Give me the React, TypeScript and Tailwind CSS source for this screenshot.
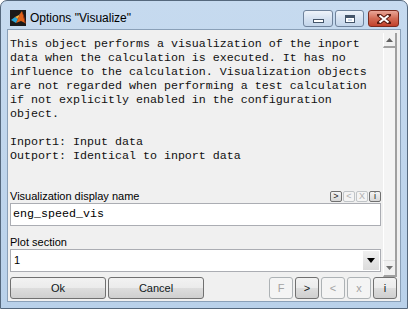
import React from "react";

const DESC = `This object performs a visualization of the inport
data when the calculation is executed. It has no
influence to the calculation. Visualization objects
are not regarded when performing a test calculation
if not explicitly enabled in the configuration
object.

Inport1: Input data
Outport: Identical to inport data`;

const MatlabIcon = () => (
    <svg width="16" height="16" viewBox="0 0 16 16" className="shrink-0">
        <rect x="0" y="0" width="16" height="16" fill="#1a1a1a" />
        <polygon points="1,10 5,7 8,9 6,13" fill="#2aa7d8" />
        <polygon points="5,7 8,9 10,4 12,1 9,5" fill="#f0b040" />
        <polygon points="8,9 10,4 12,1 13,5 15,13 11,11 6,13" fill="#e0621a" />
        <polygon points="12,1 13,5 15,13 16,14 14,6" fill="#b83a10" />
    </svg>
);

const CaptionButton = ({ kind }: { kind: "min" | "max" | "close" }) => {
    if (kind === "close") {
        return (
            <div className="w-[31px] h-[17px] rounded-[3px] border border-[#7a2a1e] bg-gradient-to-b from-[#e9a698] via-[#d26a54] to-[#c2402a] flex items-center justify-center">
                <svg width="14" height="10" viewBox="0 0 14 10">
                    <path d="M2 1 L12 9 M12 1 L2 9" stroke="#5a1a10" strokeWidth="4" strokeLinecap="square" />
                    <path d="M2.5 1.5 L11.5 8.5 M11.5 1.5 L2.5 8.5" stroke="#ffffff" strokeWidth="2.2" />
                </svg>
            </div>
        );
    }
    return (
        <div
            className={`${kind === "min" ? "w-[30px]" : "w-[29px]"} h-[17px] rounded-[3px] border border-[#6f829b] bg-gradient-to-b from-[#eef3fa] via-[#d6e2f1] to-[#c3d5ea] flex items-center justify-center`}
        >
            {kind === "min" ? (
                <div className="w-[11px] h-[4px] mt-[5px] bg-white border border-[#44556a]" />
            ) : (
                <div className="w-[10px] h-[8px] bg-white border border-[#44556a] border-t-[3px] flex items-center justify-center">
                    <div className="w-[4px] h-[2px] bg-[#c9d8ea]" />
                </div>
            )}
        </div>
    );
};

const MiniButton = ({ label, enabled }: { label: string; enabled: boolean }) => (
    <div
        className={`w-[12px] h-[11px] rounded-[2px] border flex items-center justify-center text-[9px] leading-none ${
            enabled ? "border-[#707070] bg-gradient-to-b from-[#f4f4f4] to-[#d6d6d6] text-[#202020]" : "border-[#c0c4c7] bg-[#f4f4f4] text-[#b0b0b0]"
        }`}
    >
        {label}
    </div>
);

const PushButton = ({ label, width, enabled = true }: { label: string; width: string; enabled?: boolean }) => (
    <div
        className={`${width} h-[22px] rounded-[3px] border flex items-center justify-center text-[11px] ${
            enabled
                ? "border-[#707070] bg-[linear-gradient(#f2f2f2_0%,#ebebeb_50%,#dddddd_51%,#cfcfcf_100%)] text-[#101820]"
                : "border-[#adb2b5] bg-[#f4f4f4] text-[#a3a3a3]"
        }`}
    >
        {label}
    </div>
);

const Scrollbar = () => (
    <div className="w-[14px] mt-[3px] flex flex-col border-r-2 border-[#a0a0a0]">
        <div className="h-[15px] bg-[#f0f0f0] border-l border-white border-b-2 border-b-[#a0a0a0] flex items-center justify-center">
            <svg width="7" height="4" viewBox="0 0 7 4">
                <polygon points="0,4 7,4 3.5,0" fill="#606060" />
            </svg>
        </div>
        <div className="flex-1 bg-[#f4f4f4] border-l border-white" />
        <div className="h-[17px] bg-[#f0f0f0] border-l border-white border-t border-t-[#e0e0e0] border-b-2 border-b-[#a0a0a0] flex items-center justify-center">
            <svg width="7" height="4" viewBox="0 0 7 4">
                <polygon points="0,0 7,0 3.5,4" fill="#707070" />
            </svg>
        </div>
    </div>
);

export default function App() {
    return (
        <div className="w-[408px] h-[309px] rounded-t-[7px] border border-[#55687d] bg-gradient-to-b from-[#c6daef] to-[#b9d1ea] flex flex-col font-['Liberation_Sans',Arial,sans-serif] text-black">
            {/* title bar */}
            <div className="h-[28px] flex items-start pl-[9px] pr-[8px]">
                <div className="mt-[9px]">
                    <MatlabIcon />
                </div>
                <div className="ml-[4px] mt-[10px] text-[12px] leading-[15px] text-black">
                    Options "Visualize"
                </div>
                <div className="ml-auto mt-[9px] flex items-start">
                    <CaptionButton kind="min" />
                    <div className="w-[2px]" />
                    <CaptionButton kind="max" />
                    <div className="w-[4px]" />
                    <CaptionButton kind="close" />
                </div>
            </div>

            {/* client area */}
            <div className="mx-[6px] mb-[6px] flex-1 border border-[#8aa0b8] bg-[#f0f0f0] flex flex-col">
                <div className="h-[247px] flex">
                    <div className="flex-1 px-[2px] pt-[7px] flex flex-col">
                        <pre className="m-0 font-['Liberation_Mono','Courier_New',monospace] text-[11.67px] leading-[14px] whitespace-pre text-[#111]">
                            {DESC}
                        </pre>

                        <div className="mt-[27px] h-[12px] flex items-center">
                            <span className="text-[11px] leading-[12px]">Visualization display name</span>
                            <div className="ml-auto flex gap-[1px]">
                                <MiniButton label=">" enabled />
                                <MiniButton label="<" enabled={false} />
                                <MiniButton label="X" enabled={false} />
                                <MiniButton label="i" enabled />
                            </div>
                        </div>
                        <div className="mt-[1px] h-[23px] bg-white border border-[#abadb3] flex items-center px-[2px] font-['Liberation_Mono','Courier_New',monospace] text-[11.67px]">
                            eng_speed_vis
                        </div>

                        <div className="mt-[9px] h-[14px] text-[11px] leading-[14px]">Plot section</div>
                        <div className="h-[23px] bg-white border border-[#abadb3] flex items-center pl-[3px] text-[11px]">
                            <span>1</span>
                            <div className="ml-auto mr-[1px] w-[16px] h-[19px] bg-gradient-to-b from-[#f0f0f0] to-[#dcdcdc] flex items-center justify-center">
                                <svg width="8" height="5" viewBox="0 0 8 5">
                                    <polygon points="0,0 8,0 4,5" fill="#000" />
                                </svg>
                            </div>
                        </div>
                    </div>
                    <div className="mr-[3px] flex">
                        <Scrollbar />
                    </div>
                </div>

                {/* button row */}
                <div className="h-[22px] flex items-center pl-[2px] pr-[3px]">
                    <PushButton label="Ok" width="w-[96px]" />
                    <div className="w-[2px]" />
                    <PushButton label="Cancel" width="w-[96px]" />
                    <div className="ml-auto flex gap-[2px]">
                        <PushButton label="F" width="w-[24px]" enabled={false} />
                        <PushButton label=">" width="w-[24px]" />
                        <PushButton label="<" width="w-[24px]" enabled={false} />
                        <PushButton label="x" width="w-[24px]" enabled={false} />
                        <PushButton label="i" width="w-[24px]" />
                    </div>
                </div>
            </div>
        </div>
    );
}
